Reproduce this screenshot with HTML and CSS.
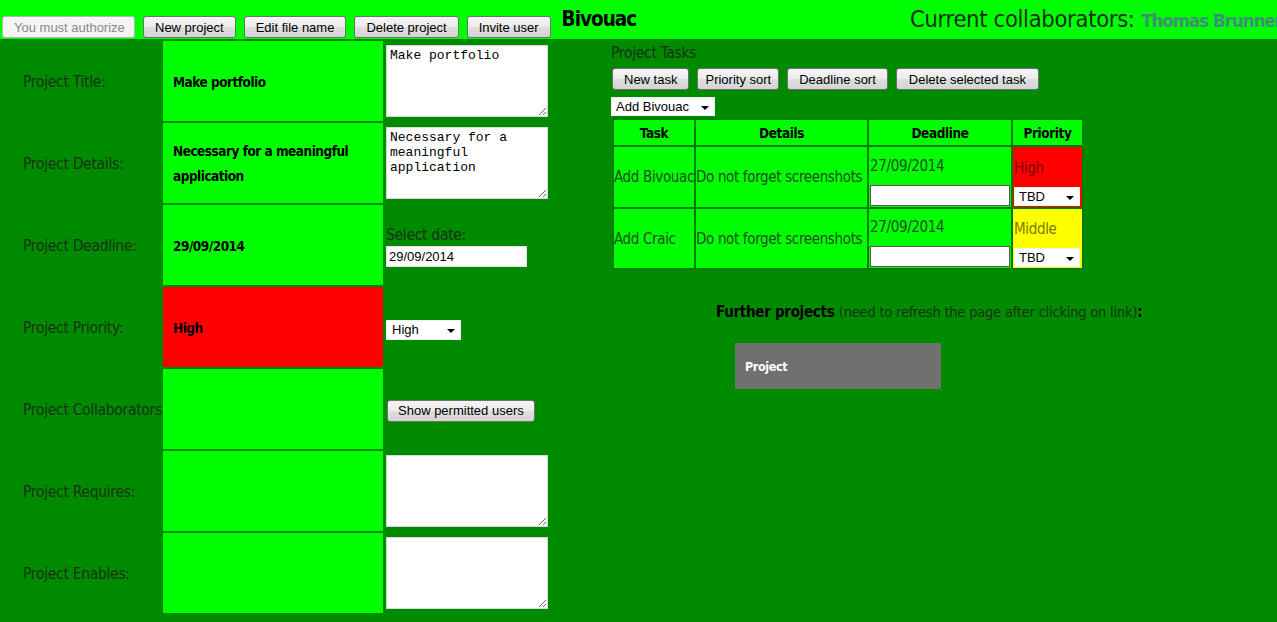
FILE: index.html
```html
<!DOCTYPE html>
<html lang="en">
<head>
<meta charset="utf-8">
<title>Bivouac</title>
<link rel="stylesheet" href="styles.css">
</head>
<body>
<header class="topbar">
  <div class="actions">
    <button class="btn btn-auth" disabled>You must authorize</button>
    <button class="btn">New project</button>
    <button class="btn">Edit file name</button>
    <button class="btn">Delete project</button>
    <button class="btn">Invite user</button>
  </div>
  <h1 class="brand">Bivouac</h1>
  <div class="collab">Current collaborators: <span class="names">Thomas Brunner</span></div>
</header>

<main class="content">
  <section class="project">
    <div class="label">Project Title:</div>
    <div class="value">Make portfolio</div>
    <div class="edit"><textarea class="area">Make portfolio</textarea></div>

    <div class="label">Project Details:</div>
    <div class="value">Necessary for a meaningful application</div>
    <div class="edit"><textarea class="area">Necessary for a meaningful application</textarea></div>

    <div class="label">Project Deadline:</div>
    <div class="value">29/09/2014</div>
    <div class="edit edit-stack">
      <div class="small-label">Select date:</div>
      <input class="date-input" type="text" value="29/09/2014">
    </div>

    <div class="label">Project Priority:</div>
    <div class="value value-high">High</div>
    <div class="edit"><span class="sel sel-priority"><select><option>High</option></select></span></div>

    <div class="label">Project Collaborators:</div>
    <div class="value"></div>
    <div class="edit"><button class="btn btn-users">Show permitted users</button></div>

    <div class="label">Project Requires:</div>
    <div class="value"></div>
    <div class="edit"><textarea class="area"></textarea></div>

    <div class="label">Project Enables:</div>
    <div class="value"></div>
    <div class="edit"><textarea class="area"></textarea></div>
  </section>

  <section class="tasks">
    <div class="tasks-title">Project Tasks</div>
    <div class="task-actions">
      <button class="btn">New task</button>
      <button class="btn btn-narrow">Priority sort</button>
      <button class="btn">Deadline sort</button>
      <button class="btn btn-wide">Delete selected task</button>
    </div>
    <span class="sel sel-task"><select><option>Add Bivouac</option></select></span>
    <table class="task-table">
      <colgroup>
        <col class="c-task"><col class="c-details"><col class="c-deadline"><col class="c-priority">
      </colgroup>
      <thead>
        <tr><th>Task</th><th>Details</th><th>Deadline</th><th>Priority</th></tr>
      </thead>
      <tbody>
        <tr class="row-1">
          <td>Add Bivouac</td>
          <td>Do not forget screenshots</td>
          <td class="stack"><div class="cell-line">27/09/2014</div><input class="cell-input" type="text"></td>
          <td class="stack prio-high"><div class="cell-line">High</div><span class="sel sel-tbd"><select><option>TBD</option></select></span></td>
        </tr>
        <tr class="row-2">
          <td>Add Craic</td>
          <td>Do not forget screenshots</td>
          <td class="stack"><div class="cell-line">27/09/2014</div><input class="cell-input" type="text"></td>
          <td class="stack prio-middle"><div class="cell-line">Middle</div><span class="sel sel-tbd"><select><option>TBD</option></select></span></td>
        </tr>
      </tbody>
    </table>

    <h2 class="further"><strong>Further projects</strong> <span class="note">(need to refresh the page after clicking on link)</span><strong>:</strong></h2>
    <div class="project-link">Project</div>
  </section>
</main>
</body>
</html>
```

FILE: styles.css
```css
html, body {
  margin: 0;
  padding: 0;
  overflow: hidden;
}
body {
  width: 1277px;
  height: 622px;
  background: #008a00;
  font-family: "DejaVu Sans Condensed", "DejaVu Sans", sans-serif;
  font-stretch: condensed;
  color: #123012;
}

/* ---------- top bar ---------- */
.topbar {
  height: 39px;
  background: #00ff00;
  display: flex;
  align-items: flex-end;
  white-space: nowrap;
}
.actions {
  display: flex;
  gap: 8px;
  padding: 0 0 1px 2px;
}
.btn {
  height: 22px;
  padding: 0 11px;
  font: 13px "Liberation Sans", Arial, sans-serif;
  color: #000;
  border: 1px solid #707070;
  border-radius: 3px;
  background: linear-gradient(#f4f4f4, #ececec 50%, #dedede 50%, #d4d4d4);
  cursor: pointer;
}
.btn-narrow { padding: 0 7px; }
.btn-wide { padding: 0 12px; }
.btn-auth {
  background: #f4f4f4;
  border-color: #b5b5b5;
  color: #8a8a8a;
  width: 133px;
}
.brand {
  margin: 0 0 0 11px;
  align-self: center;
  font-size: 20.5px;
  font-weight: 700;
  letter-spacing: -1px;
  color: #000;
  line-height: 39px;
}
.collab {
  margin-left: auto;
  margin-right: -5px;
  align-self: center;
  font-size: 23.5px;
  letter-spacing: -0.3px;
  line-height: 39px;
  color: #163016;
}
.names {
  font-size: 18.5px;
  letter-spacing: -1px;
  font-weight: 700;
  color: #3f8f78;
}

/* ---------- main ---------- */
.content {
  display: flex;
  padding-top: 2px;
}
.project {
  display: grid;
  grid-template-columns: 161px 220px 166px;
  grid-auto-rows: 80px;
  gap: 2px;
}
.label {
  display: flex;
  align-items: center;
  padding: 2px 0 0 23px;
  font-size: 15.5px;
  letter-spacing: -0.3px;
  white-space: nowrap;
  color: #143414;
}
.value {
  display: flex;
  align-items: center;
  padding: 2px 10px 0;
  background: #00ff00;
  color: #000;
  font-size: 13.5px;
  letter-spacing: -0.5px;
  font-weight: 700;
  line-height: 25px;
}
.value-high { background: #ff0000; }
.edit {
  display: flex;
  align-items: center;
  padding-left: 1px;
}
.edit-stack {
  flex-direction: column;
  align-items: flex-start;
  justify-content: center;
  padding-top: 2px;
}
.area {
  width: 162px;
  height: 72px;
  box-sizing: border-box;
  margin: 0;
  padding: 2px 3px;
  border: 1px solid #d8d8d8;
  background: #fff;
  font: 13px "Liberation Mono", "Courier New", monospace;
  color: #000;
}
.small-label {
  font-size: 15.5px;
  letter-spacing: -0.3px;
  line-height: 20px;
  color: #143414;
}
.date-input {
  width: 141px;
  height: 21px;
  box-sizing: border-box;
  margin: 1px 0 0;
  padding: 0 2px;
  border: 1px solid #e6e6e6;
  font: 13px "Liberation Sans", Arial, sans-serif;
  color: #000;
}
.btn-users {
  margin-left: 1px;
  margin-top: 3px;
  padding: 0 10px;
}

/* custom selects */
.sel {
  position: relative;
  display: inline-block;
}
.sel select {
  appearance: none;
  -webkit-appearance: none;
  box-sizing: border-box;
  margin: 0;
  padding: 0 0 0 4px;
  border: 1px solid #f0f0f0;
  border-radius: 0;
  background: #fff;
  font: 13px "Liberation Sans", Arial, sans-serif;
  color: #000;
  display: block;
}
.sel::after {
  content: "";
  position: absolute;
  right: 6px;
  top: 50%;
  margin-top: -1px;
  border-left: 4px solid transparent;
  border-right: 4px solid transparent;
  border-top: 4px solid #000;
  pointer-events: none;
}
.sel-priority select { width: 75px; height: 20px; padding-left: 5px; }
.sel-priority { margin-top: 5px; }
.sel-task select { width: 104px; height: 19px; padding-left: 4px; }
.sel-tbd select { width: 66px; height: 19px; padding-left: 4px; }

/* ---------- tasks ---------- */
.tasks {
  margin-left: 60px;
  flex: 1;
}
.tasks-title {
  font-size: 15.5px;
  letter-spacing: -0.3px;
  line-height: 24px;
  color: #143414;
}
.task-actions {
  display: flex;
  gap: 8px;
  margin: 3px 0 0 1px;
}
.sel-task { margin-top: 7px; }
.task-table {
  margin: 2px 0 0 1px;
  border-collapse: separate;
  border-spacing: 2px;
  background: #007d00;
  table-layout: fixed;
  width: 472px;
}
.c-task { width: 80px; }
.c-details { width: 171px; }
.c-deadline { width: 142px; }
.c-priority { width: 69px; }
.task-table th,
.task-table td {
  background: #00ff00;
  padding: 0;
  white-space: nowrap;
  overflow: hidden;
}
.task-table th {
  height: 25px;
  font-size: 13.5px;
  letter-spacing: -0.4px;
  font-weight: 700;
  color: #000;
  text-align: center;
}
.task-table td {
  font-size: 15px;
  letter-spacing: -0.35px;
  color: #1d4d1d;
  vertical-align: middle;
  text-align: left;
}
.row-1 td { height: 59px; }
.row-2 td { height: 58px; }
.task-table td.stack {
  vertical-align: bottom;
  padding: 0 1px 1px;
}
.cell-line {
  line-height: 24px;
  margin-bottom: 7px;
}
.cell-input {
  display: block;
  width: 140px;
  height: 21px;
  box-sizing: border-box;
  margin: 0;
  border: 1px solid #555;
  background: #fff;
}
.prio-high { background: #ff0000 !important; color: #7a0000 !important; }
.prio-middle { background: #ffff00 !important; color: #7a7a00 !important; }

.further {
  margin: 28px 0 0 105px;
  font-size: 15px;
  letter-spacing: -0.3px;
  font-weight: 700;
  color: #000;
  line-height: 28px;
  white-space: nowrap;
}
.further .note {
  font-size: 14.5px;
  letter-spacing: -0.2px;
  font-weight: 400;
  color: #143414;
}
.project-link {
  margin: 17px 0 0 124px;
  width: 206px;
  height: 46px;
  box-sizing: border-box;
  padding-left: 9px;
  display: flex;
  align-items: center;
  background: #707070;
  border: 1px solid #6a7a6a;
  color: #fff;
  font-size: 12.5px;
  letter-spacing: -0.4px;
  font-weight: 700;
}
```
